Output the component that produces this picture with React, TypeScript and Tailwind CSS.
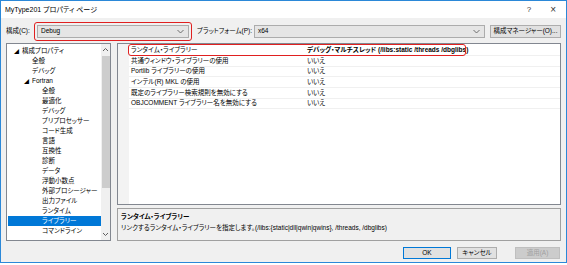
import React from 'react';

const font = "font-['Liberation_Sans','Noto_Sans_CJK_JP',sans-serif] [font-feature-settings:'palt']";

const tree: { label: string; indent: number; arrow?: boolean; selected?: boolean }[] = [
    { label: '構成プロパティ', indent: 0, arrow: true },
    { label: '全般', indent: 1 },
    { label: 'デバッグ', indent: 1 },
    { label: 'Fortran', indent: 1, arrow: true },
    { label: '全般', indent: 2 },
    { label: '最適化', indent: 2 },
    { label: 'デバッグ', indent: 2 },
    { label: 'プリプロセッサー', indent: 2 },
    { label: 'コード生成', indent: 2 },
    { label: '言語', indent: 2 },
    { label: '互換性', indent: 2 },
    { label: '診断', indent: 2 },
    { label: 'データ', indent: 2 },
    { label: '浮動小数点', indent: 2 },
    { label: '外部プロシージャー', indent: 2 },
    { label: '出力ファイル', indent: 2 },
    { label: 'ランタイム', indent: 2 },
    { label: 'ライブラリー', indent: 2, selected: true },
    { label: 'コマンドライン', indent: 2 },
];

const props: [string, string][] = [
    ['共通ウィンドウ・ライブラリーの使用', 'いいえ'],
    ['Portlib ライブラリーの使用', 'いいえ'],
    ['インテル(R) MKL の使用', 'いいえ'],
    ['既定のライブラリー検索規則を無効にする', 'いいえ'],
    ['OBJCOMMENT ライブラリー名を無効にする', 'いいえ'],
];

function Chevron() {
    return (
        <svg width="7" height="5" viewBox="0 0 7 5" className="shrink-0">
            <path d="M0.5 1 L3.5 4 L6.5 1" fill="none" stroke="#606060" strokeWidth="0.9" />
        </svg>
    );
}

function Combo({ value, width }: { value: string; width: string }) {
    return (
        <div className={`flex h-[13px] items-center justify-between border border-[#acacac] bg-[#e5e5e5] pl-[3px] pr-[4px] ${width}`}>
            <span>{value}</span>
            <Chevron />
        </div>
    );
}

function Button({ label, primary, disabled, width }: { label: string; primary?: boolean; disabled?: boolean; width: string }) {
    const look = disabled
        ? 'border-[#bfbfbf] bg-[#cccccc] text-[#a0a0a0]'
        : primary
          ? 'border-[#0078d7] bg-[#e1e1e1] text-black'
          : 'border-[#adadad] bg-[#e1e1e1] text-black';
    return <div className={`flex h-[12px] items-center justify-center border ${look} ${width}`}>{label}</div>;
}

export default function App() {
    return (
        <div className={`h-[265px] w-[567px] bg-white text-[6.5px] leading-none text-black ${font}`}>
            <div className="flex h-[263px] flex-col border border-[#2b88d8] bg-[#f0f0f0]">
                <div className="flex h-[17px] items-center justify-between bg-white pl-[4px] pr-[10px] text-[7px]">
                    <span>MyType201 プロパティ ページ</span>
                    <div className="flex items-center gap-[19px] text-[8px] text-[#333]">
                        <span>?</span>
                        <span className="text-[10px] font-light">×</span>
                    </div>
                </div>

                <div className="flex flex-col px-[5px]">
                    <div className="mt-[7px] flex h-[13px] items-center whitespace-nowrap">
                        <span className="w-[31px]">構成(C):</span>
                        <div className="relative">
                            <Combo value="Debug" width="w-[152px]" />
                            <div className="absolute -inset-x-[3px] -inset-y-[3px] rounded-[3px] border-[1.5px] border-[#e02020]" />
                        </div>
                        <span className="ml-[8px] mr-[2px]">プラットフォーム(P):</span>
                        <Combo value="x64" width="flex-1" />
                        <div className="ml-[5px] flex h-[13px] w-[71px] items-center justify-center border border-[#adadad] bg-[#e1e1e1]">
                            構成マネージャー(O)...
                        </div>
                    </div>

                    <div className="mt-[5px] flex gap-[6px]">
                        <div className="flex h-[198px] w-[105px] border border-[#828790] bg-white">
                            <div className="flex flex-1 flex-col pl-[1px] pt-[2px]">
                                {tree.map((t, i) => (
                                    <div
                                        key={i}
                                        className={`flex h-[10px] items-center ${t.selected ? 'bg-[#0078d7] text-white' : ''}`}
                                        style={{ paddingLeft: 6 + t.indent * 10 }}
                                    >
                                        <span className="w-[8px] text-[5px]">{t.arrow ? '◢' : ''}</span>
                                        <span>{t.label}</span>
                                    </div>
                                ))}
                            </div>
                            <div className="flex w-[9px] flex-col items-center bg-[#f0f0f0]">
                                <svg width="7" height="8" viewBox="0 0 7 8" className="mt-[2px]">
                                    <path d="M1 5 L3.5 2.5 L6 5" fill="none" stroke="#606060" strokeWidth="1" />
                                </svg>
                                <div className="mt-[2px] h-[132px] w-[8px] bg-[#cdcdcd]" />
                                <div className="flex-1" />
                                <svg width="7" height="8" viewBox="0 0 7 8" className="mb-[2px]">
                                    <path d="M1 3 L3.5 5.5 L6 3" fill="none" stroke="#606060" strokeWidth="1" />
                                </svg>
                            </div>
                        </div>

                        <div className="flex flex-1 flex-col gap-[3px]">
                            <div className="flex h-[162px] border border-[#828790] bg-white">
                                <div className="w-[11px] bg-[#f3f3f3]" />
                                <div className="flex flex-1 flex-col pt-[1px]">
                                    <div className="relative flex h-[11px] items-center border-b border-[#f0f0f0]">
                                        <span className="w-[178px] pl-[2px]">ランタイム・ライブラリー</span>
                                        <span className="font-bold">デバッグ・マルチスレッド (/libs:static /threads /dbglibs)</span>
                                        <div className="absolute -top-[1px] -bottom-[1px] -left-[1px] w-[338px] rounded-[3px] border-[1.5px] border-[#e02020]" />
                                    </div>
                                    {props.map(([k, v]) => (
                                        <div key={k} className="flex h-[10.7px] items-center border-b border-[#f0f0f0]">
                                            <span className="w-[178px] pl-[2px]">{k}</span>
                                            <span>{v}</span>
                                        </div>
                                    ))}
                                </div>
                            </div>
                            <div className="flex h-[33px] flex-col gap-[4px] border border-[#a0a0a0] px-[3px] pt-[5px]">
                                <span className="font-bold">ランタイム・ライブラリー</span>
                                <span>リンクするランタイム・ライブラリーを指定します。(/libs:&#123;static|dll|qwin|qwins&#125;, /threads, /dbglibs)</span>
                            </div>
                        </div>
                    </div>

                    <div className="mt-[6px] flex justify-end gap-[6px] pr-[1px]">
                        <Button label="OK" primary width="w-[48px]" />
                        <Button label="キャンセル" width="w-[40px]" />
                        <div className="w-[6px]" />
                        <Button label="適用(A)" disabled width="w-[45px]" />
                    </div>
                </div>
            </div>
        </div>
    );
}
